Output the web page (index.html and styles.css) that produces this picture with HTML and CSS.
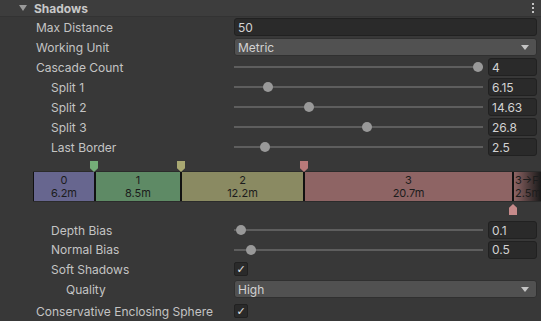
FILE: index.html
```html
<!DOCTYPE html>
<html lang="en">
<head>
  <meta charset="UTF-8" />
  <title>Shadows</title>
  <link rel="stylesheet" href="styles.css">
</head>
<body>

<div class="header">
  <span class="fold"></span>
  <span class="title">Shadows</span>
  <span class="menu"><i></i><i></i><i></i></span>
</div>

<div class="rows">
  <div class="row">
    <label class="lv0">Max Distance</label>
    <div class="field text">50</div>
  </div>
  <div class="row">
    <label class="lv0">Working Unit</label>
    <div class="field drop">Metric<span class="caret"></span></div>
  </div>
  <div class="row">
    <label class="lv0">Cascade Count</label>
    <div class="slider"><div class="track"><span class="knob" style="left:244px"></span></div><div class="field num">4</div></div>
  </div>
  <div class="row">
    <label class="lv1">Split 1</label>
    <div class="slider"><div class="track"><span class="knob" style="left:34px"></span></div><div class="field num">6.15</div></div>
  </div>
  <div class="row">
    <label class="lv1">Split 2</label>
    <div class="slider"><div class="track"><span class="knob" style="left:75px"></span></div><div class="field num">14.63</div></div>
  </div>
  <div class="row">
    <label class="lv1">Split 3</label>
    <div class="slider"><div class="track"><span class="knob" style="left:133px"></span></div><div class="field num">26.8</div></div>
  </div>
  <div class="row">
    <label class="lv1">Last Border</label>
    <div class="slider"><div class="track"><span class="knob" style="left:31px"></span></div><div class="field num">2.5</div></div>
  </div>
</div>

<div class="cascades">
  <span class="pin top green" style="left:90px"></span>
  <span class="pin top olive" style="left:177px"></span>
  <span class="pin top pink" style="left:300px"></span>
  <div class="bar">
    <div class="seg c0" style="width:60px"><span>0</span><span>6.2m</span></div>
    <div class="seg c1" style="width:84px"><span>1</span><span>8.5m</span></div>
    <div class="seg c2" style="width:121px"><span>2</span><span>12.2m</span></div>
    <div class="seg c3" style="width:207px"><span>3</span><span>20.7m</span></div>
    <div class="seg fade"><span>3→F</span><span>2.5m</span></div>
  </div>
  <span class="pin bottom" style="left:509px"></span>
</div>

<div class="rows">
  <div class="row">
    <label class="lv1">Depth Bias</label>
    <div class="slider"><div class="track"><span class="knob" style="left:7px"></span></div><div class="field num">0.1</div></div>
  </div>
  <div class="row tight">
    <label class="lv1">Normal Bias</label>
    <div class="slider"><div class="track"><span class="knob" style="left:17px"></span></div><div class="field num">0.5</div></div>
  </div>
  <div class="row">
    <label class="lv1">Soft Shadows</label>
    <div><span class="check">✓</span></div>
  </div>
  <div class="row">
    <label class="lv2">Quality</label>
    <div class="field drop">High<span class="caret"></span></div>
  </div>
  <div class="row last">
    <label class="lv0">Conservative Enclosing Sphere</label>
    <div><span class="check">✓</span></div>
  </div>
</div>

</body>
</html>
```

FILE: styles.css
```css
html, body {
  margin: 0; padding: 0; height: 100%;
  font-family: Inter, "Noto Sans", sans-serif;
  font-size: 12px;
  background: #383838; color: #c4c4c4; overflow: hidden;
}

.header {
  height: 16px; background: #3d3d3d;
  display: flex; align-items: center;
  border-bottom: 1px solid #333;
}
.fold {
  width: 0; height: 0; margin-left: 19px; margin-right: 7px;
  border-left: 4px solid transparent; border-right: 4px solid transparent;
  border-top: 6px solid #9a9a9a;
}
.title { font-weight: 700; color: #c8c8c8; }
.menu {
  margin-left: auto; margin-right: 7px;
  display: flex; flex-direction: column; gap: 2px;
}
.menu i { width: 2px; height: 2px; background: #c4c4c4; }

.rows { display: flex; flex-direction: column; }
.row {
  display: grid; grid-template-columns: 234px 1fr;
  height: 20px; align-items: center; padding-right: 4px;
}
.row.tight { height: 19px; }
.row.last { margin-top: 2px; }
.lv0 { padding-left: 36px; }
.lv1 { padding-left: 51px; }
.lv2 { padding-left: 66px; }

.field {
  height: 18px; box-sizing: border-box; border-radius: 3px;
  display: flex; align-items: center; padding: 0 3px;
  color: #d2d2d2;
}
.text { background: #2a2a2a; border: 1px solid #212121; }
.drop { background: #515151; border: 1px solid #303030; }
.caret {
  margin-left: auto; margin-right: 4px;
  border-left: 4px solid transparent; border-right: 4px solid transparent;
  border-top: 5px solid #c4c4c4;
}

.slider { display: flex; align-items: center; gap: 5px; }
.track {
  flex: 1; height: 2px; background: #5e5e5e; position: relative;
}
.knob {
  position: absolute; top: -4px; margin-left: -5px;
  width: 10px; height: 10px; border-radius: 50%; background: #999;
}
.num {
  width: 49px; background: #2a2a2a; border: 1px solid #212121;
}

.check {
  display: flex; align-items: center; justify-content: center;
  width: 14px; height: 14px; box-sizing: border-box;
  background: #2a2a2a; border: 1px solid #212121; border-radius: 2px;
  color: #e6e6e6; font-size: 11px; font-family: "DejaVu Sans", sans-serif;
}

.cascades {
  position: relative; height: 63px; padding: 14px 0 0 33px;
  box-sizing: border-box;
}
.bar {
  display: flex; height: 31px; gap: 2px;
  background: #111; border-top: 1px solid #2b2b2b; border-bottom: 1px solid #2b2b2b;
  box-sizing: border-box; padding-left: 1px;
}
.seg {
  display: flex; flex-direction: column; align-items: center; justify-content: center;
  font-size: 11px; line-height: 13px; color: #1c1c1c; flex-shrink: 0;
}
.c0 { background: #67668f; }
.c1 { background: #5e8a65; }
.c2 { background: #8a8a62; }
.c3 { background: #8e6464; }
.fade {
  flex: 1; align-items: flex-start; padding-left: 1px; overflow: hidden;
  background: linear-gradient(to right, #8e6464, #1a1a1a);
  white-space: nowrap;
}
.pin {
  position: absolute; width: 8px; height: 11px;
  clip-path: polygon(0 0, 100% 0, 100% 65%, 50% 100%, 0 65%);
}
.pin.top { top: 4px; }
.pin.bottom {
  top: 47px; background: #c68a8a;
  clip-path: polygon(50% 0, 100% 35%, 100% 100%, 0 100%, 0 35%);
}
.green { background: #74ad78; }
.olive { background: #a9a872; }
.pink { background: #b87a7a; }
```
